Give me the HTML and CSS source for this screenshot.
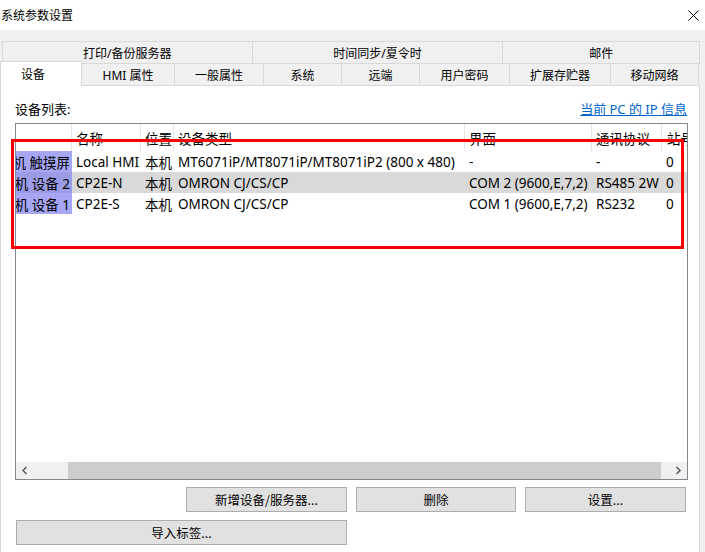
FILE: index.html
```html
<!DOCTYPE html>
<html lang="zh-CN">
<head>
    <meta charset="UTF-8">
    <title>系统参数设置</title>
    <link rel="stylesheet" href="styles.css">
</head>
<body>
    <div class="titlebar">
        <span class="title">系统参数设置</span>
        <svg class="close" width="11" height="11" viewBox="0 0 11 11">
            <path d="M0.5 0.5 L10.5 10.5 M10.5 0.5 L0.5 10.5" stroke="#000" stroke-width="1" fill="none"/>
        </svg>
    </div>

    <div class="window">
        <div class="tab-row top-row">
            <div class="tab w-print">打印/备份服务器</div>
            <div class="tab w-time">时间同步/夏令时</div>
            <div class="tab w-mail">邮件</div>
        </div>
        <div class="tab-row bottom-row">
            <div class="tab active">设备</div>
            <div class="tab w-hmi">HMI 属性</div>
            <div class="tab w-general">一般属性</div>
            <div class="tab w-system">系统</div>
            <div class="tab w-remote">远端</div>
            <div class="tab w-password">用户密码</div>
            <div class="tab w-storage">扩展存贮器</div>
            <div class="tab w-mobile">移动网络</div>
        </div>

        <div class="panel">
            <div class="list-head">
                <span>设备列表:</span>
                <a class="ip-link" href="#">当前 PC 的 IP 信息</a>
            </div>

            <div class="listview">
                <div class="grid header">
                    <div class="cell"></div>
                    <div class="cell">名称</div>
                    <div class="cell">位置</div>
                    <div class="cell">设备类型</div>
                    <div class="cell">界面</div>
                    <div class="cell">通讯协议</div>
                    <div class="cell">站号</div>
                </div>
                <div class="grid row">
                    <div class="cell first"><span>本机 触摸屏</span></div>
                    <div class="cell">Local HMI</div>
                    <div class="cell">本机</div>
                    <div class="cell">MT6071iP/MT8071iP/MT8071iP2 (800 x 480)</div>
                    <div class="cell">-</div>
                    <div class="cell">-</div>
                    <div class="cell">0</div>
                </div>
                <div class="grid row selected">
                    <div class="cell first"><span>本机 设备 2</span></div>
                    <div class="cell">CP2E-N</div>
                    <div class="cell">本机</div>
                    <div class="cell">OMRON CJ/CS/CP</div>
                    <div class="cell">COM 2 (9600,E,7,2)</div>
                    <div class="cell">RS485 2W</div>
                    <div class="cell">0</div>
                </div>
                <div class="grid row">
                    <div class="cell first"><span>本机 设备 1</span></div>
                    <div class="cell">CP2E-S</div>
                    <div class="cell">本机</div>
                    <div class="cell">OMRON CJ/CS/CP</div>
                    <div class="cell">COM 1 (9600,E,7,2)</div>
                    <div class="cell">RS232</div>
                    <div class="cell">0</div>
                </div>
                <div class="list-space"></div>
                <div class="hscroll">
                    <div class="arrow">
                        <svg width="7" height="9" viewBox="0 0 7 9"><path d="M5.5 1 L2 4.5 L5.5 8" stroke="#606060" stroke-width="1.6" fill="none"/></svg>
                    </div>
                    <div class="track"><div class="thumb"></div></div>
                    <div class="arrow">
                        <svg width="7" height="9" viewBox="0 0 7 9"><path d="M1.5 1 L5 4.5 L1.5 8" stroke="#606060" stroke-width="1.6" fill="none"/></svg>
                    </div>
                </div>
            </div>

            <div class="button-row">
                <button class="btn w-add">新增设备/服务器...</button>
                <button class="btn w-del">删除</button>
                <button class="btn w-set">设置...</button>
            </div>
            <div class="button-row left">
                <button class="btn w-import">导入标签...</button>
            </div>
        </div>
    </div>

    <div class="mark"></div>
</body>
</html>
```

FILE: styles.css
```css
* {
    margin: 0;
    padding: 0;
    box-sizing: border-box;
}

body {
    width: 705px;
    height: 552px;
    overflow: hidden;
    background: #f0f0f0;
    font-family: "Noto Sans", "Noto Sans CJK SC", sans-serif;
    color: #000;
    position: relative;
}

.titlebar {
    height: 30px;
    background: #fff;
    display: flex;
    align-items: center;
    justify-content: space-between;
    padding: 0 6px 0 1px;
}

.title {
    font-size: 12px;
}

.close {
    display: block;
}

.window {
    padding-top: 11px;
    width: 700px;
}

/* tabs */
.tab-row {
    display: flex;
    font-size: 12px;
}

.top-row {
    margin-left: 2px;
}

.bottom-row {
    margin-top: -1px;
    margin-bottom: -1px;
}

.tab {
    height: 23px;
    border: 1px solid #d9d9d9;
    margin-left: -1px;
    display: flex;
    align-items: center;
    justify-content: center;
    background: #f0f0f0;
}

.tab:first-child {
    margin-left: 0;
}

.tab.active {
    width: 82px;
    height: 25px;
    margin-top: -2px;
    background: #fff;
    border-bottom: none;
    position: relative;
    z-index: 1;
    padding: 0 16px 1px 0;
}

.w-print { width: 251px; }
.w-time { width: 252px; }
.w-mail { width: 198px; }
.w-hmi { width: 94px; }
.w-general { width: 90px; }
.w-system { width: 79px; }
.w-remote { width: 79px; }
.w-password { width: 91px; }
.w-storage { width: 102px; }
.w-mobile { width: 89px; }

/* panel */
.panel {
    background: #fff;
    border: 1px solid #d9d9d9;
    height: 480px;
    padding: 13px 11px 0 14px;
    font-size: 13px;
}

.list-head {
    height: 18px;
    display: flex;
    align-items: center;
    justify-content: space-between;
    padding-right: 1px;
}

.ip-link {
    color: #0066cc;
    text-decoration: underline;
}

.listview {
    margin-top: 6px;
    height: 357px;
    border: 1px solid #828790;
    display: flex;
    flex-direction: column;
    overflow: hidden;
    font-size: 13.5px;
}

.grid {
    display: grid;
    grid-template-columns: 56px 69px 33px 291px 127px 70px 1fr;
}

.header {
    height: 27px;
}

.header .cell {
    border-right: 1px solid #e5e5e5;
    padding-left: 4px;
}

.header .cell:last-child {
    border-right: none;
    padding-left: 5px;
}

.row {
    height: 21px;
}

.row.selected {
    background: #d9d9d9;
}

.cell {
    display: flex;
    align-items: center;
    white-space: nowrap;
    overflow: hidden;
    padding-left: 4px;
}

.cell.first {
    justify-content: flex-end;
    padding: 0 2px 0 0;
    background: #a6a6f5;
}

.row.selected .cell.first {
    background: #9c9ce6;
}

.list-space {
    flex: 1;
}

/* horizontal scrollbar */
.hscroll {
    height: 17px;
    display: flex;
    background: #f0f0f0;
}

.arrow {
    width: 17px;
    display: flex;
    align-items: center;
    justify-content: center;
}

.track {
    flex: 1;
}

.thumb {
    margin-left: 35px;
    width: 593px;
    height: 100%;
    background: #cdcdcd;
}

/* buttons */
.button-row {
    display: flex;
    justify-content: flex-end;
    gap: 9px;
    margin-top: 7px;
    margin-right: 2px;
}

.button-row.left {
    justify-content: flex-start;
    margin-top: 8px;
    margin-left: 1px;
}

.btn {
    height: 25px;
    background: #e1e1e1;
    border: 1px solid #adadad;
    font-family: "Noto Sans CJK SC", sans-serif;
    font-size: 12.5px;
    color: #000;
}

.w-add { width: 161px; }
.w-del { width: 160px; }
.w-set { width: 161px; }
.w-import { width: 331px; }

/* annotation overlay */
.mark {
    position: absolute;
    left: 11px;
    top: 139px;
    width: 673px;
    height: 110px;
    border: 3px solid #ff0000;
}
```
